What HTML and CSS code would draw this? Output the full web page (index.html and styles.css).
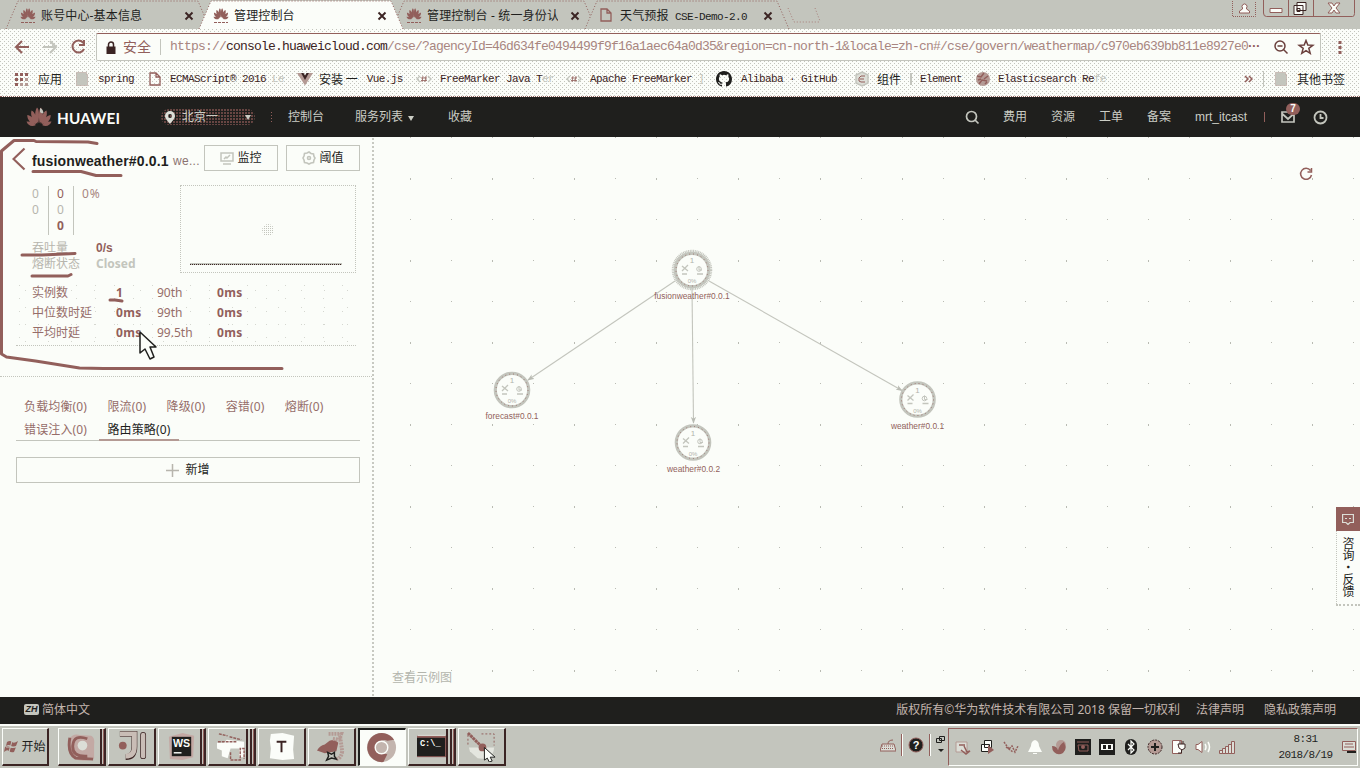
FILE: index.html
```html
<!DOCTYPE html>
<html lang="zh-CN">
<head>
<meta charset="utf-8">
<title>管理控制台</title>
<link rel="stylesheet" href="styles.css">
</head>
<body>
<svg class="defs" aria-hidden="true">
  <symbol id="petals" viewBox="0 0 26 20">
    <path d="M12.4 16C9 13 8 5 11 .5c2 1 2.6 8 1.4 15.500zM13.600 16C17 13 18 5 15 .5c-2 1-2.600 8-1.400 15.500zM11.500 16.500C7 14 4 9 5.500 3.500 8 4 11 10 11.500 16.500zM14.500 16.500C19 14 22 9 20.500 3.500 18 4 15 10 14.500 16.500zM10.500 17C5 17 1 13 1.300 8 4 8 9 12 10.500 17zM15.500 17C21 17 25 13 24.700 8 22 8 17 12 15.500 17zM10 18c-4 2-8 .8-9.500-3.500C4 14 8 16 10 18zM16 18c4 2 8 .8 9.500-3.500C22 14 18 16 16 18z"/>
  </symbol>
  <symbol id="page" viewBox="0 0 12 14"><path d="M1 1h6l4 4v8H1zM7 1v4h4" fill="none" stroke="#925f5b" stroke-width="1.300"/></symbol>
  <symbol id="cross" viewBox="0 0 10 10"><path d="M1.500 1.500l7 7M8.500 1.500l-7 7" stroke="#3b2423" stroke-width="1.900"/></symbol>
  <symbol id="tag" viewBox="0 0 16 8"><path d="M4 1L1 4l3 3M12 1l3 3-3 3" fill="none" stroke="#c3c5bd" stroke-width="1.400"/><path d="M7 1L6 7M10 1L9 7M5 3h6M5 5.500h6" stroke="#925f5b" stroke-width=".8"/></symbol>
  <symbol id="folder" viewBox="0 0 12 14"><path d="M.5.5h10v2h1v11H.5z" fill="#c3c5bd" stroke="#b49a94" stroke-dasharray="1 1"/></symbol>
</svg>

<div class="tabs">
  <div class="tab"><svg class="tab-shape" viewBox="0 0 206 29"><path d="M1 29L13 1H193L205 29"/></svg><svg class="fav"><use href="#petals" height="12"/><path d="M1 14.500h14" class="favline"/></svg><span>账号中心-基本信息</span><svg class="close"><use href="#cross"/></svg></div>
  <div class="tab"><svg class="tab-shape" viewBox="0 0 206 29"><path d="M1 29L13 1H193L205 29"/></svg><svg class="fav"><use href="#petals" height="12"/><path d="M1 14.500h14" class="favline"/></svg><span class="t3">管理控制台 - 统一身份认</span><svg class="close"><use href="#cross"/></svg></div>
  <div class="tab active"><svg class="tab-shape" viewBox="0 0 206 29"><path d="M1 29L13 1H193L205 29"/></svg><svg class="fav"><use href="#petals" height="12"/><path d="M1 14.500h14" class="favline"/></svg><span>管理控制台</span><svg class="close"><use href="#cross"/></svg></div>
  <div class="tab"><svg class="tab-shape" viewBox="0 0 206 29"><path d="M1 29L13 1H193L205 29"/></svg><svg class="fav"><use href="#page" width="12" height="14" x="1"/></svg><span>天气预报 <i class="mono">CSE-Demo-2.0</i></span><svg class="close"><use href="#cross"/></svg></div>
  <svg class="newtab" viewBox="0 0 34 18"><path d="M1 1l6 14h26M28 1l5 13" fill="none" stroke="#a87f7a" stroke-dasharray="1 2"/></svg>
  <div class="winbtns">
    <svg viewBox="0 0 126 18" width="126" height="18" fill="none">
      <path d="M1.500 1v15.500h23V1" stroke="#925f5b" stroke-dasharray="1 1"/>
      <path d="M8.500 13v-2l3-2V8a2.500 2.500 0 1 1 4 0v1l3 2v2z" stroke="#925f5b" fill="#fbfdf9"/>
      <path d="M32.500 0v13q0 3.500 3 3.500h86q2 0 2-3V0M57.500 0v16M82.500 0v16" stroke="#925f5b"/>
      <path d="M39 8.500h12v4H39z" fill="#fbfdf9" stroke="#925f5b"/>
      <path d="M66 2.500h9v8h-9zM63 5.500h9v9h-9z" fill="#fbfdf9" stroke="#3b2423"/><path d="M66 8.500h3v3h-3z" stroke="#3b2423"/>
      <path d="M97 3h4l2 3 2-3h4l-4 5 4 5h-4l-2-3-2 3h-4l4-5z" fill="#fbfdf9" stroke="#925f5b"/>
    </svg>
  </div>
</div>

<div class="toolbar dither">
  <svg width="72" height="18" viewBox="0 0 72 18" fill="none" stroke-width="2">
    <path d="M15 9H2M8 3L2 9l6 6" stroke="#925f5b"/>
    <path d="M29 9h13M36 3l6 6-6 6" stroke="#c3c5bd"/>
    <path d="M69 4.500A6 6 0 1 0 70 11M70 2v5h-5" stroke="#925f5b"/>
  </svg>
  <div class="url">
    <svg width="10" height="13" viewBox="0 0 10 13"><path d="M.5 5.500h9V13h-9z" fill="#3b2423"/><path d="M2.500 6V3.500a2.500 2.500 0 0 1 5 0V6" fill="none" stroke="#3b2423" stroke-width="1.500"/></svg>
    <span class="safe">安全</span>
    <span class="addr"><em>https://</em><b>console.huaweicloud.com</b>/cse/?agencyId=46d634fe0494499f9f16a1aec64a0d35&amp;region=cn-north-1&amp;locale=zh-cn#/cse/govern/weathermap/c970eb639bb811e8927e0<u>···</u></span>
    <svg width="42" height="16" viewBox="0 0 42 16" fill="none" stroke="#6b403d" stroke-width="1.500"><circle cx="6" cy="7" r="5"/><path d="M9.500 10.500l4 4M3.500 7h5"/><path d="M32 1.500l1.800 4.500 5 .3-4 3 1.400 5L32 11.600l-4.200 2.700 1.400-5-4-3 5-.3z"/></svg>
  </div>
  <svg width="4" height="16" viewBox="0 0 4 16" fill="#925f5b"><path d="M.5 2h3v3h-3zM.5 7h3v3h-3zM.5 12h3v3h-3z"/></svg>
</div>

<div class="bookmarks dither">
  <svg width="14" height="14" viewBox="0 0 14 14" fill="#925f5b"><path d="M0 1h3v3H0zM5 1h3v3H5zM10 1h3v3h-3zM0 6h3v3H0zM5 6h3v3H5zM0 11h3v3H0z"/><path d="M10 6h3v3h-3zM5 11h3v3H5zM10 11h3v3h-3z" fill="#b49a94"/></svg>
  <span class="cn">应用</span>
  <svg width="12" height="14"><use href="#folder"/></svg><span>spring</span>
  <svg width="12" height="14"><use href="#page"/></svg><span>ECMAScript® 2016 <s>Le</s></span>
  <svg width="16" height="14" viewBox="0 0 16 14"><path d="M0 1h4l4 6 4-6h4L8 13.500z" fill="#b49a94"/><path d="M4 1h2.500L8 3.500 9.500 1H12L8 8z" fill="#3b2423"/></svg><span class="mix"><i class="cn">安装 一</i>Vue.js</span>
  <svg width="16" height="8"><use href="#tag"/></svg><span>FreeMarker Java T<s>er</s></span>
  <svg width="16" height="8"><use href="#tag"/></svg><span>Apache FreeMarker <s>]</s></span>
  <svg width="16" height="16" viewBox="0 0 16 16"><path fill="#1f1f1d" d="M8 0C3.580 0 0 3.580 0 8c0 3.540 2.290 6.530 5.470 7.590.4.070.550-.170.550-.380v-1.490c-2.010.370-2.530-.490-2.690-.940-.090-.230-.480-.940-.820-1.130-.280-.150-.680-.520-.010-.530.630-.010 1.080.580 1.230.820.720 1.210 1.870.870 2.330.660.070-.520.280-.870.510-1.070-1.780-.2-3.640-.890-3.640-3.950 0-.870.310-1.590.820-2.150-.080-.2-.360-1.020.080-2.120 0 0 .670-.210 2.200.820a7.500 7.500 0 0 1 4 0c1.530-1.040 2.200-.820 2.200-.820.440 1.100.160 1.920.080 2.120.510.560.820 1.270.820 2.150 0 3.070-1.870 3.750-3.650 3.950.290.250.540.730.540 1.480v2.200c0 .210.150.460.550.380A8 8 0 0 0 16 8c0-4.420-3.580-8-8-8z"/></svg><span>Alibaba · GitHub</span>
  <svg width="14" height="16" viewBox="0 0 14 16"><path d="M7 1l6 3v8l-6 3-6-3V4z" fill="#dcded7" stroke="#c3c5bd" stroke-width="1.500"/><path d="M10 5H6L4 7v3l2 1h4M5 8h4" fill="none" stroke="#925f5b"/></svg><span class="cn">组件</span>
  <i class="vbar"></i><span>Element</span>
  <svg width="16" height="16" viewBox="0 0 16 16"><circle cx="8" cy="8" r="7" fill="#b49a94"/><path d="M2 5l4 1 3-4M4 13l3-4 5 1M9 8l4-3M3 9l3-1M10 13l2-2" stroke="#925f5b" stroke-width="1.500" fill="none"/></svg><span>Elasticsearch Re<s>fe</s></span>
  <svg width="9" height="8" viewBox="0 0 9 8"><path d="M1 1l3 3-3 3M5 1l3 3-3 3" stroke="#925f5b" fill="none" stroke-width="1.500"/></svg>
  <i class="vbar thin"></i>
  <svg width="12" height="14"><use href="#folder"/></svg><span class="cn">其他书签</span>
</div>

<header class="nav">
  <svg class="logo" width="26" height="20"><use href="#petals" fill="#925f5b"/><path d="M14 1q3 1 3.500 5-2 1-3.500-1z" fill="#c3c5bd"/></svg>
  <span class="brand">HUAWEI</span>
  <div class="region">
    <svg width="10" height="13" viewBox="0 0 10 13"><path fill-rule="evenodd" d="M5 0a5 5 0 0 1 5 5c0 3-3 5-5 8C3 10 0 8 0 5a5 5 0 0 1 5-5zm0 3a2 2 0 1 0 0 4 2 2 0 0 0 0-4z" fill="#dcded7"/></svg>
    <span>北京一</span><i class="caret"></i>
  </div>
  <i class="navsep"></i><span>控制台</span><span>服务列表<i class="caret"></i></span><span>收藏</span>
  <svg width="15" height="15" viewBox="0 0 15 15" fill="none" stroke="#c3c5bd" stroke-width="1.700"><circle cx="6.500" cy="6.500" r="5"/><path d="M10 10l3.500 3.500"/></svg>
  <span>费用</span><span>资源</span><span>工单</span><span>备案</span><span class="user">mrt_itcast</span><i class="navsep red"></i>
  <div class="mail"><svg width="14" height="12" viewBox="0 0 14 12" fill="none" stroke="#c3c5bd" stroke-width="1.700"><path d="M1 1h12v10H1zM1.500 3L7 8l5.500-5"/></svg><b>7</b></div>
  <svg width="15" height="15" viewBox="0 0 15 15" fill="none" stroke="#c3c5bd" stroke-width="1.800"><circle cx="7.500" cy="7.500" r="6"/><path d="M7.500 4v4h3"/></svg>
</header>

<main class="main">
  <section class="side">
    <div class="title-row">
      <svg width="14" height="24" viewBox="0 0 14 24"><path d="M12.500 1.500L1.500 12l11 10.500" fill="none" stroke="#925f5b" stroke-width="2.200"/></svg>
      <h1>fusionweather#0.0.1</h1><span class="ver">we...</span>
      <button class="btn"><svg width="14" height="13" viewBox="0 0 14 13" fill="none" stroke="#c3c5bd" stroke-width="1.500"><path d="M1 1h12v8H1zM3 12h8M4 7l2-2 1 1 3-3"/></svg>监控</button>
      <button class="btn"><svg width="14" height="14" viewBox="0 0 14 14" fill="none" stroke="#c3c5bd" stroke-width="1.600"><path d="M7 1l2 1.500 2.500.5.500 2.500L13 7l-1 2-.5 2.500L9 12l-2 1-2-1-2.500-.5L2 9 1 7l1-2 .5-2.500L5 2z"/><circle cx="7" cy="7" r="1.500"/></svg>阈值</button>
    </div>
    <div class="overview">
      <div class="figures">
        <div class="counts">
          <div class="c1"><span>0</span><span>0</span></div>
          <div class="c2"><span class="r">0</span><span>0</span><b class="r">0</b></div>
          <div class="c3">0%</div>
        </div>
        <dl class="health"><dt>吞吐量</dt><dd class="dark">0/s</dd><dt>熔断状态</dt><dd>Closed</dd></dl>
      </div>
      <div class="chart"><i class="blob"></i><i class="base"></i></div>
    </div>
    <div class="latency">
      <span>实例数</span><b>1</b><span>90th</span><b>0ms</b>
      <span>中位数时延</span><b>0ms</b><span>99th</span><b>0ms</b>
      <span>平均时延</span><b>0ms</b><span>99.5th</span><b>0ms</b>
    </div>
    <div class="policies">
      <span>负载均衡(0)</span><span>限流(0)</span><span>降级(0)</span><span>容错(0)</span><span>熔断(0)</span>
      <span>错误注入(0)</span><span class="on">路由策略(0)</span>
    </div>
    <button class="add"><svg width="13" height="13" viewBox="0 0 13 13"><path d="M6.500 0v13M0 6.500h13" stroke="#b7b5ad" stroke-width="1.500"/></svg>新增</button>

    <svg class="ink" viewBox="0 0 375 240" fill="none" stroke="#925f5b" stroke-width="3" stroke-linecap="round" stroke-linejoin="round">
      <path d="M97 6.500L88 5 36 4.500 34 3.500H14L1.500 14v203l5 3 29 4 44 7 24 .5H282"/>
      <path d="M33 34.500h48l15 4h25M22 118h20l33-1.500M32 139h36l3-1.500M110 163h5l7 1"/>
      <path d="M140 195v21l5-4 5 10 4-2-4-10h6z" fill="#fbfdf9" stroke="#1f1f1d" stroke-width="1.500"/>
    </svg>
  </section>

  <section class="canvas">
    <svg class="topo" viewBox="375 137 985 560" width="985" height="560">
      <defs>
        <marker id="tip" viewBox="0 0 8 6" refX="7" refY="3" markerWidth="7" markerHeight="6" markerUnits="userSpaceOnUse" orient="auto"><path d="M0 0l8 3-8 3 2-3z" fill="#b9bbb3"/></marker>
        <g id="node">
          <circle r="16.700" fill="#fbfdf9" stroke="#c3c5bd" stroke-width="3.200"/>
          <circle r="16" fill="none" stroke="#925f5b" stroke-width=".8" stroke-dasharray="1 3"/>
          <g fill="none" stroke="#c3c5bd"><path d="M-10-4l6 5M-10 1l6-6M-10 4h5M5 4h6" stroke-width="1.300"/><circle cx="7" cy="-1" r="2.300"/><path d="M7-4v4h3"/></g>
          <text y="-7" font-size="8">1</text><text y="13" font-size="6">0%</text>
        </g>
      </defs>
      <g stroke="#c3c5bd" stroke-width="1.100">
        <path d="M675 281L528 380" marker-end="url(#tip)"/><path d="M692 288L693.500 423" marker-end="url(#tip)"/><path d="M709 281L902 390.500" marker-end="url(#tip)"/>
      </g>
      <circle cx="692" cy="270" r="19" fill="none" stroke="#c3c5bd" stroke-width="2.500" stroke-dasharray="1 .7"/>
      <use href="#node" x="692" y="270"/><use href="#node" x="512" y="390"/><use href="#node" x="693" y="442.500"/><use href="#node" x="917.500" y="399.500"/>
      <g class="names"><text x="692" y="299">fusionweather#0.0.1</text><text x="512" y="419">forecast#0.0.1</text><text x="693.500" y="472">weather#0.0.2</text><text x="917.500" y="429">weather#0.0.1</text></g>
    </svg>
    <svg class="refresh" viewBox="0 0 14 14"><path d="M11.500 3.500A5.500 5.500 0 1 0 12.500 8M12.500 1v4h-4" fill="none" stroke="#925f5b" stroke-width="1.500"/></svg>
    <span class="sample">查看示例图</span>
    <aside class="feedback">
      <div class="fb-icon"><svg width="12" height="12" viewBox="0 0 12 12" fill="none" stroke="#dcded7" stroke-width="1.200"><path d="M.6 1.500h10.800v8H8l-2 2-2-2H.6zM3 5.500h2M7 5.500h2"/></svg></div>
      <p>咨询·反馈</p>
    </aside>
  </section>
</main>

<footer class="foot"><b class="zh">ZH</b><span class="lang">简体中文</span><span>版权所有©华为软件技术有限公司 2018 保留一切权利</span><span>法律声明</span><span>隐私政策声明</span></footer>

<div class="taskbar">
  <button class="start"><svg width="16" height="15" viewBox="0 0 16 15"><path d="M3 3q3-2 5 0t6-1l-2 5q-3 2-5 0t-5 0zM1 8q3-2 5 0t6 0l-2 5q-3 1-5-1t-5 1z" fill="#925f5b"/><path d="M8 2L5 13M2 8h11" stroke="#c3c5bd"/></svg>开始</button>
  <div class="tasks">
    <button class="multi"><svg viewBox="0 0 32 32"><path d="M3 8q5-6 11-4l12 1q4 2 3 9v14q-10 5-20 1-7-3-6-21z" fill="#c3a9a4"/><path d="M22 8Q8 3 7 15t15 11M4 7q-3 16 6 21l18 1" fill="none" stroke="#925f5b" stroke-width="3"/><circle cx="17" cy="15" r="5" fill="#dcded7"/></svg></button>
    <button><svg viewBox="0 0 32 32" fill="none"><path d="M4 3h15v13q0 11-9 11" stroke="#3b2423" stroke-width="6"/><path d="M4 3h15v13q0 10-9 10" stroke="#c9bdb6" stroke-width="5"/><path d="M28 4v22" stroke="#3b2423" stroke-width="6" stroke-linecap="round"/><path d="M28 4v22" stroke="#c9bdb6" stroke-width="4.500" stroke-linecap="round"/><circle cx="7" cy="15" r="4" fill="#925f5b"/></svg></button>
    <button class="multi"><svg viewBox="0 0 32 32"><path d="M3 6l14-4 12 3-1 22-11 3-13-1z" fill="#c3a9a4"/><path d="M6 6h20v20H6z" fill="#1f1f1d"/><path d="M8 22.500h8" stroke="#fbfdf9" stroke-width="1.500"/><text x="16" y="17" class="ws">WS</text></svg></button>
    <button class="multi2"><svg viewBox="0 0 32 32"><path d="M1 12h7l3-3 18 2v16h-5v-9h-9l-3 10-6-2v-6l-5-2z" fill="#fbfdf9"/><path d="M3 3l9 2M14 6l12 3M2 11h20M15 22v8h10V18h4v11" stroke="#925f5b" stroke-width="1.500" fill="none" stroke-dasharray="3 1"/></svg></button>
    <button><svg viewBox="0 0 32 32"><path d="M5 3l12-1 12 3-1 14 1 10-12 1-13-2 1-10-1-8z" fill="#fbfdf9"/><path d="M11 11h10M16 11v11" stroke="#3b2423" stroke-width="2"/></svg></button>
    <button><svg viewBox="0 0 32 32"><path d="M1 20q3-5 8-6l5-4q6-2 9 2l-2 9-12 2z" fill="#925f5b"/><path d="M13 3h13l-2 6-7-1M25 6l2 15q-1 8-7 8" stroke="#b49a94" stroke-width="4" fill="none" stroke-dasharray="2 1"/><path d="M12 22l4 2 3-2v4l2 3-5-1-5 2 2-4z" stroke="#1f1f1d" fill="#c3c5bd" stroke-width="1.500"/></svg></button>
    <button class="current"><svg viewBox="0 0 32 32"><circle cx="16" cy="16" r="15" fill="#c3b5ae"/><path d="M29 8A15 15 0 1 0 18 31l4-8-6-1a7 7 0 1 1 6-13z" fill="#925f5b"/><circle cx="16" cy="16" r="6.500" fill="#c3b5ae" stroke="#fbfdf9" stroke-width="1.500"/></svg></button>
    <button class="multi2"><svg viewBox="0 0 32 32"><path d="M1 5h30v22H1z" fill="#925f5b"/><path d="M1 7h29v19H1z" fill="#1f1f1d"/><path d="M2 4.500h28" stroke="#dcded7"/><text x="4" y="15" class="cmd">C:\_</text></svg></button>
    <button><svg viewBox="0 0 32 32"><path d="M3 17h26q0 9-9 12l-8-1-8-7z" fill="#e4e6df"/><path d="M2 2l14 14" stroke="#925f5b" stroke-width="3" stroke-dasharray="3 .5"/><path d="M16 3h13v12M2 4v12" stroke="#925f5b" fill="none" stroke-dasharray="2 2"/><circle cx="17" cy="17" r="4" fill="#925f5b"/><path d="M19 17v13l3-2 2 4 3-1-2-4h5z" fill="#fbfdf9" stroke="#1f1f1d"/></svg></button>
  </div>
  <div class="quick">
    <svg width="16" height="14" viewBox="0 0 16 14"><path d="M2 6h12l2 7H0z" fill="#dcded7" stroke="#925f5b"/><path d="M2 8h12M2 10.500h12" stroke="#925f5b" stroke-dasharray="1 1"/><path d="M8 6q0-4 5-4" fill="none" stroke="#925f5b"/></svg>
    <i class="groove"></i>
    <svg width="16" height="16" viewBox="0 0 16 16"><circle cx="8" cy="8" r="7" fill="#1f1f1d" stroke="#925f5b"/><text x="8" y="12" class="help">?</text></svg>
    <i class="groove"></i>
    <svg width="9" height="20" viewBox="0 0 9 20" fill="none" stroke="#1f1f1d"><path d="M3.500 1.500h5v4h-5zM.5 3.500h5v4h-5z"/><path d="M2 14h6l-3 3z" fill="#1f1f1d" stroke="none"/></svg>
  </div>
  <div class="tray">
    <svg viewBox="0 0 16 16"><path d="M1 3h11v10H1z" fill="#dcded7" stroke="#b49a94"/><path d="M9 7l3 6 3-1-4 3-5-4M4 6h6" fill="none" stroke="#925f5b" stroke-width="1.500"/></svg>
    <svg viewBox="0 0 16 16"><path d="M5.500 1.500h7v7h-7zM2.500 5.500h8v7h-8z" fill="#fbfdf9" stroke="#1f1f1d"/><path d="M9 6l6 5-6 4z" fill="#925f5b"/></svg>
    <svg viewBox="0 0 16 16"><path d="M1 3l5 7 3-3 3 6 3-6M3 8l7 5" fill="none" stroke="#925f5b" stroke-width="1.500" stroke-dasharray="2 1"/></svg>
    <svg viewBox="0 0 16 16"><path d="M8 1q4 1 4 6l3 6H1l3-6q0-5 4-6zM6 14h4v1H6z" fill="#fbfdf9"/></svg>
    <svg viewBox="0 0 16 16"><circle cx="10" cy="6" r="5" fill="#b49a94"/><path d="M1 7q5 0 6 4 2-6 6-8l1 3q2 4-2 8-5 3-9-1-2-2-2-6z" fill="#925f5b"/></svg>
    <svg viewBox="0 0 16 16"><path d="M0 0h16v16H0z" fill="#1f1f1d"/><path d="M2 3h12M3 6h10v6H4z" fill="none" stroke="#925f5b"/><circle cx="8" cy="8" r="2" fill="#925f5b"/></svg>
    <svg viewBox="0 0 16 16"><path d="M0 0h16v16H0z" fill="#1f1f1d"/><path d="M2 5h12v6H2z" fill="#fbfdf9"/><path d="M4 6h3v4H4zM9 6h3v4H9z" fill="#1f1f1d"/></svg>
    <svg viewBox="0 0 16 16"><rect x="2" width="12" height="16" rx="6" fill="#1f1f1d"/><path d="M5 5l6 6-3 3V2l3 3-6 6" fill="none" stroke="#fbfdf9" stroke-width="1.200"/></svg>
    <svg viewBox="0 0 16 16"><circle cx="8" cy="8" r="7" fill="#b49a94" stroke="#3b2423" stroke-dasharray="2 1"/><path d="M8 4v8M4 8h8" stroke="#1f1f1d" stroke-width="2"/></svg>
    <svg viewBox="0 0 16 16"><path d="M1.500 1.500h9v13h-9z" fill="#fbfdf9" stroke="#925f5b"/><path d="M7 5h7v4l-3 2-3-2zM9 2v3M12 2v3M10.500 11v3H7" fill="#fbfdf9" stroke="#3b2423"/></svg>
    <svg viewBox="0 0 16 16"><path d="M1 5.500h2l4-3v11l-4-3H1z" fill="#fbfdf9" stroke="#925f5b"/><path d="M10 5q2 3 0 6M13 3q3 5 0 10" fill="none" stroke="#fbfdf9" stroke-width="1.500"/></svg>
    <svg viewBox="0 0 16 16"><path d="M.5 11.500h3v3h-3zM3.500 9.500h3v5h-3zM6.500 7.500h3v7h-3zM9.500 5.500h3v9h-3zM12.500 2.500h3v12h-3z" fill="#dcded7" stroke="#925f5b"/></svg>
    <div class="clock"><span>8:31</span><span>2018/8/19</span></div>
    <svg viewBox="0 0 16 16"><path d="M1.500 2.500h13v9h-13z" fill="#dcded7" stroke="#925f5b"/><path d="M4 5h8M3 8h10" stroke="#925f5b"/><path d="M6 12h9v2H6z" fill="#1f1f1d"/></svg>
  </div>
</div>
</body>
</html>
```

FILE: styles.css
```css
* { box-sizing: border-box; }
:root { --paper: #fbfdf9; --gray: #c3c5bd; --red: #925f5b; --ink: #1f1f1d; }
html, body { margin: 0; width: 1360px; height: 768px; overflow: hidden; }
body { display: flex; flex-direction: column; background: var(--paper); color: var(--ink); font: 12px/16px "Noto Sans", "Noto Sans CJK SC", sans-serif; }
body > * { flex: none; }
svg { display: block; flex: none; }
i, em { font-style: normal; }
u, s { text-decoration: none; }
button { font: inherit; color: inherit; padding: 0; margin: 0; }
.defs { position: absolute; width: 0; height: 0; }
.mono, .bookmarks { font-family: "Liberation Mono", "Noto Sans CJK SC", monospace; font-size: 11px; letter-spacing: -.6px; }
.mono { margin-left: 3px; }

.dither {
  background-image: conic-gradient(from 0deg at 1px 1px, transparent 0 270deg, var(--gray) 0), conic-gradient(from 0deg at 1px 1px, transparent 0 270deg, var(--gray) 0);
  background-size: 4px 4px;
  background-position: 0 0, 2px 2px;
}

/* browser tabs */
.tabs { display: flex; height: 29px; background: var(--gray); padding-left: 6px; }
.tab { width: 193px; height: 29px; display: flex; align-items: center; padding: 2px 0 0 14px; position: relative; white-space: nowrap; }
.tab:nth-child(2) { order: 2; }
.tab:nth-child(3) { order: 1; }
.tab:nth-child(4) { order: 3; }
.tab-shape { position: absolute; left: -1px; top: 0; width: 206px; height: 29px; }
.tab-shape path { fill: var(--gray); stroke: var(--red); stroke-dasharray: 1 2; }
.tab.active { z-index: 2; }
.tab.active .tab-shape path { fill: var(--paper); }
.fav { width: 16px; height: 16px; margin-right: 5px; position: relative; fill: var(--red); }
.fav use { width: 16px; }
.favline { stroke: var(--red); stroke-dasharray: 3 1; }
.tab span { width: 143px; height: 16px; position: relative; font-size: 12px; line-height: 16px; letter-spacing: .15px; overflow: hidden; }
.tab .mono { line-height: 1; }
.tab .t3 { width: 131px; margin-right: 12px; }
.close { width: 10px; height: 10px; position: relative; }
.newtab { order: 4; width: 34px; height: 18px; margin: 7px 0 0 9px; }
.winbtns { order: 5; margin-left: auto; width: 129px; }

/* address bar */
.toolbar { height: 36px; display: flex; align-items: center; padding-left: 14px; }
.url { width: 1225px; height: 28px; margin: 0 17px 0 10px; display: flex; align-items: center; background: var(--paper); border: 1px solid var(--gray); border-top-color: var(--red); border-radius: 2px; padding-left: 9px; }
.safe { font-size: 14px; color: var(--red); width: 38px; margin-left: 7px; border-right: 1px solid var(--gray); white-space: nowrap; }
.addr { width: 1104px; margin-left: 9px; white-space: nowrap; font: 13px/16px "Liberation Mono", monospace; letter-spacing: -.801px; color: #a88580; }
.addr b { font-weight: 400; color: #3b2423; }
.addr u { font-weight: 700; letter-spacing: -3.800px; margin-left: -2px; color: var(--red); }

/* bookmarks */
.bookmarks { height: 32px; display: grid; align-items: center; white-space: nowrap; color: #3b2423; padding: 0 0 3px 15px; border-bottom: 1px dotted var(--red);
  grid-template-columns: 23px 38px 22px 51px 21px 127px 22px 97px 24px 126px 24px 126px 25px 114px 22px 33px 10px 55px 23px 246px 19px 12px 22px 60px; }
.bookmarks s { color: var(--gray); }
.cn { font: 12px/16px "Noto Sans CJK SC", sans-serif; letter-spacing: 0; color: var(--ink); }
.mix { display: flex; align-items: center; gap: 9px; }
.vbar { width: 2px; height: 12px; background: var(--gray); }
.vbar.thin { width: 1px; height: 16px; }

/* console header */
.nav { height: 40px; background: var(--ink); color: #cbcdc5; display: grid; align-items: center; white-space: nowrap; padding-left: 26px;
  grid-template-columns: 31px 104px 110px 17px 67px 93px 517px 38px 48px 48px 48px 48px 69px 17px 32px 20px; }
.brand { font: 700 15.300px/18px Lato, sans-serif; color: var(--paper); padding-top: 2px; letter-spacing: .15px; }
.region { width: 94px; height: 16px; border-radius: 8px; display: flex; align-items: center; padding-left: 4px; gap: 7px; background: radial-gradient(circle at 1px 1px, #6d4845 .7px, var(--ink) .8px) 0 0 / 3px 3px; }
.caret { display: inline-block; border: 4px solid transparent; border-top: 5px solid #cbcdc5; border-bottom: 0; border-left-width: 3.500px; border-right-width: 3.500px; margin-left: 5px; }
.region .caret { margin-left: auto; margin-right: 4px; }
.navsep { width: 1px; height: 10px; background: repeating-linear-gradient(var(--red) 0 1px, var(--ink) 1px 3px); }
.navsep.red { background: var(--red); }
.user { font-family: "Liberation Sans", sans-serif; }
.mail { position: relative; }
.mail b { position: absolute; left: 5px; top: -8px; width: 14px; height: 12px; border-radius: 6px; background: var(--red); color: var(--paper); font: 700 10px/12px "Liberation Sans", sans-serif; text-align: center; }

/* page */
.main { display: flex; height: 560px; }
.side { width: 375px; position: relative; padding: 8px 15px 0 12px; background: radial-gradient(circle, var(--gray) .7px, transparent .8px) 371px 0 / 4px 4px repeat-y; }
.title-row { display: flex; height: 28px; align-items: center; white-space: nowrap; }
h1 { font: 700 14px/20px "Liberation Sans", sans-serif; letter-spacing: .15px; width: 141px; margin: 4px 0 0 6px; }
.ver { width: 31px; margin-top: 4px; font: 12px/20px "Liberation Sans", sans-serif; color: #8b7370; letter-spacing: .3px; }
.btn { width: 74px; height: 26px; margin: -2px 8px 0 0; background: none; border: 1px solid var(--gray); display: flex; align-items: center; justify-content: center; gap: 3px; }
.btn:last-child { margin-right: 0; }
.overview { display: flex; height: 110px; padding: 12px 0 0 20px; }
.figures { width: 148px; color: #b7b5ad; }
.counts { display: flex; height: 49px; margin-top: 1px; }
.counts > div { display: flex; flex-direction: column; }
.c1 { width: 17px; border-right: 1px solid var(--gray); }
.c2 { width: 25px; padding-left: 8px; border-right: 1px solid var(--gray); }
.counts .c3 { padding-left: 8px; color: #a88580; letter-spacing: .8px; }
.r { color: var(--red); }
.health { display: grid; grid-template-columns: 64px 80px; margin: 5px 0 0; }
.health dd { margin: 0; font-weight: 700; color: var(--gray); }
.health .dark { color: var(--red); font: 700 12px/16px "Liberation Sans", sans-serif; }
.chart { width: 176px; height: 88px; border: 1px dotted var(--gray); display: flex; flex-direction: column; align-items: center; }
.blob { width: 12px; height: 12px; margin-top: 38px; border-radius: 50%; background: conic-gradient(from 0deg at 1px 1px, transparent 0 270deg, var(--gray) 0) 0 0 / 2px 2px; }
.base { width: 152px; height: 2px; margin: 27px 4px 0 0; border-top: 1px solid var(--gray); background: repeating-linear-gradient(to right, #3b2423 0 1px, var(--gray) 1px 2px); }
.latency { display: grid; grid-template-columns: 84px 41px 60px 60px; grid-auto-rows: 20px; align-items: center; height: 63px; padding-left: 16px; margin: 0 4px 0 4px; color: #966d69; border-bottom: 1px dotted var(--gray);
  background: conic-gradient(from 0deg at 1px 1px, transparent 0 270deg, #d5d7d0 0) 3px 2px / 19px 13px, conic-gradient(from 0deg at 1px 1px, transparent 0 270deg, #d5d7d0 0) 9px 7px / 23px 17px; }
.latency b { color: var(--red); letter-spacing: .4px; }
.policies { margin: 30px 0 0 4px; width: 344px; height: 65px; padding: 19px 0 0 8px; display: flex; flex-wrap: wrap; gap: 0 20.300px; line-height: 23px; letter-spacing: .15px; color: #966d69; border-bottom: 1px solid var(--gray); position: relative; white-space: nowrap; }
.policies::before { content: ""; position: absolute; left: -16px; top: 0; width: 372px; border-top: 1px dotted var(--gray); }
.policies span { height: 23px; }
.policies .on { color: var(--ink); margin-left: -8px; padding: 0 8px; border-bottom: 2px solid #b49a94; }
.add { display: flex; align-items: center; justify-content: center; gap: 6px; width: 344px; height: 26px; margin: 16px 0 0 4px; border: 1px solid var(--gray); background: none; }
.ink { position: absolute; left: 0; top: 0; width: 375px; height: 240px; }

.canvas { width: 985px; position: relative; background: conic-gradient(from 0deg at 1px 1px, transparent 0 270deg, #b9bbb3 0) 35px 0 / 41px 41px, conic-gradient(from 0deg at 1px 2px, transparent 0 270deg, #b9bbb3 0) 35px 41px / 82px 82px; }
.topo text { font-family: "Liberation Sans", sans-serif; text-anchor: middle; fill: #b1b3ab; }
.topo .names text { font-size: 8.400px; fill: var(--red); }
.refresh { position: absolute; right: 47px; top: 30px; width: 14px; height: 14px; }
.sample { position: absolute; left: 17px; bottom: 11px; color: #b3b5ad; }
.feedback { position: absolute; right: 0; top: 370px; width: 24px; height: 99px; background: var(--paper); border-left: 1px dotted var(--gray); border-bottom: 2px dotted var(--gray); }
.fb-icon { width: 24px; height: 24px; margin: 0 0 6px -1px; background: var(--red); display: flex; align-items: center; justify-content: center; }
.feedback p { margin: 0 0 0 -1px; height: 62px; writing-mode: vertical-rl; font: 12px/24px "Noto Sans CJK SC", sans-serif; white-space: nowrap; }

/* page footer */
.foot { height: 27px; background: var(--ink); color: #c3b5ae; display: flex; align-items: center; padding: 0 24px 2px; gap: 16px; white-space: nowrap; }
.zh { width: 15px; height: 11px; border-radius: 2px; background: var(--gray); color: var(--ink); font: italic 700 9px/11px "Liberation Sans", sans-serif; text-align: center; }
.lang { margin: 0 auto 0 -13px; }
.foot span:last-child { margin-left: 4px; }

/* desktop taskbar */
.taskbar { height: 44px; background: var(--gray); border-top: 2px solid var(--paper); display: flex; padding: 2px 2px 0; }
.taskbar > * { flex: none; }
.taskbar button { height: 38px; background: var(--gray); border: 1px solid var(--paper); border-right: 2px solid #3b2423; border-bottom: 2px solid #3b2423; }
.start { width: 47px; display: flex; align-items: center; justify-content: center; gap: 1px; white-space: nowrap; }
.tasks { display: flex; gap: 2px; margin-left: 9px; width: 820px; }
.tasks button { width: 48px; display: flex; align-items: center; padding-left: 7px; }
.tasks svg { width: 31px; height: 31px; }
.tasks .multi { background: linear-gradient(to left, var(--red) 0 1px, var(--gray) 1px 2px, #3b2423 2px 4px, var(--gray) 4px); }
.tasks .multi2 { background: linear-gradient(to left, var(--red) 0 1px, var(--gray) 1px 2px, #3b2423 2px 4px, var(--gray) 4px 6px, #3b2423 6px 8px, var(--gray) 8px); }
.tasks .current { background: var(--paper); border: 2px solid var(--ink); border-right: 1px solid var(--paper); border-bottom: 1px solid var(--paper); padding-left: 6px; }
.ws { font: 700 11px "Liberation Sans", sans-serif; fill: var(--paper); text-anchor: middle; }
.cmd { font: 700 9px "Liberation Mono", monospace; fill: var(--paper); }
.help { font: 700 11px "Liberation Sans", sans-serif; fill: var(--paper); text-anchor: middle; }
.quick { display: flex; align-items: center; width: 70px; gap: 5px; padding: 0 0 6px 2px; }
.groove { width: 2px; height: 22px; flex: none; background: var(--red); border-right: 1px solid var(--paper); }
.tray { width: 410px; height: 38px; border: 1px solid var(--paper); border-top-color: var(--red); border-left-color: var(--red); display: flex; align-items: center; gap: 8px; padding-left: 6px; }
.tray svg { width: 16px; height: 16px; }
.clock { width: 90px; padding-left: 35px; display: flex; flex-direction: column; align-items: center; font: 11px/16px "Liberation Mono", monospace; letter-spacing: -.6px; }
```
